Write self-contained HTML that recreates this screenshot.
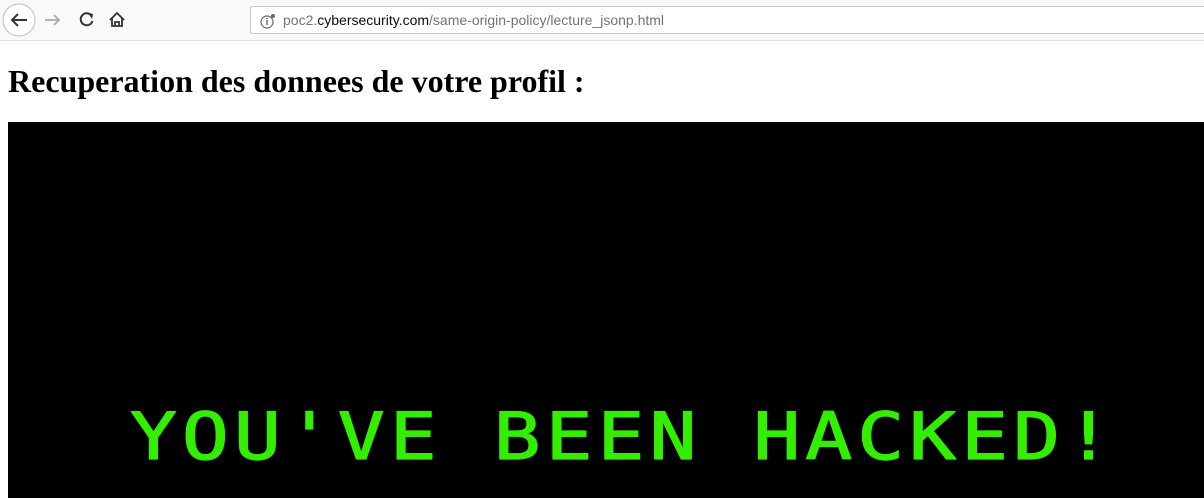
<!DOCTYPE html>
<html><head><style>
body{margin:0;width:1204px;height:498px;overflow:hidden;background:#fff;font-family:"Liberation Sans",sans-serif;position:relative}
.bar{position:absolute;left:0;top:0;width:1204px;height:40px;background:#f9f9fa;border-bottom:1px solid #e0e0e0}
.url{position:absolute;left:250px;top:6px;width:960px;height:28px;background:#fff;border:1px solid #c8c8c8;border-radius:2px;box-sizing:border-box;font-size:14px;line-height:26px;color:#737373;padding-left:32px}
.url b{font-weight:normal;color:#0c0c0d}
h1{position:absolute;left:8px;top:63px;margin:0;font:bold 32px "Liberation Serif",serif;color:#000;white-space:nowrap}
.blk{position:absolute;left:8px;top:122px;width:1196px;height:376px;background:#000}
</style></head><body>
<div class="bar">
<svg width="250" height="40" style="position:absolute;left:0;top:0">
<circle cx="19" cy="20" r="16" fill="#fff" stroke="#bcbcbc"/>
<path d="M27 20H12M18 14l-6 6 6 6" fill="none" stroke="#333" stroke-width="2"/>
<path d="M45 20h14M54 15l5 5-5 5" fill="none" stroke="#aaa" stroke-width="1.8"/>
<path d="M91 15a6 6 0 1 0 1.5 6" fill="none" stroke="#333" stroke-width="2"/>
<path d="M88 13l5 1-1 5z" fill="#333"/>
<path d="M110 20l7-7 7 7M112 18v8h10v-8M115 26v-4h4v4" fill="none" stroke="#333" stroke-width="1.8"/>
</svg>
<div class="url"><svg width="20" height="20" style="position:absolute;left:8px;top:4px"><circle cx="8" cy="11" r="6" fill="none" stroke="#666" stroke-width="1.2"/><path d="M8 9v5" stroke="#666" stroke-width="1.4"/><circle cx="8" cy="7.5" r=".9" fill="#666"/><circle cx="14" cy="5" r="2" fill="#666"/></svg>poc2.<b>cybersecurity.com</b>/same-origin-policy/lecture_jsonp.html</div>
</div>
<h1>Recuperation des donnees de votre profil :</h1>
<div class="blk"></div>
<svg width="1204" height="498" style="position:absolute;left:0;top:0">
<text x="130" y="459" font-family="DejaVu Sans Mono" font-size="78" fill="#33ee00" stroke="#33ee00" stroke-width="1.5" stroke-linejoin="round" textLength="982" lengthAdjust="spacing" transform="translate(0,459) scale(1,0.83) translate(0,-459)">YOU'VE BEEN HACKED!</text>
</svg>
</body></html>
